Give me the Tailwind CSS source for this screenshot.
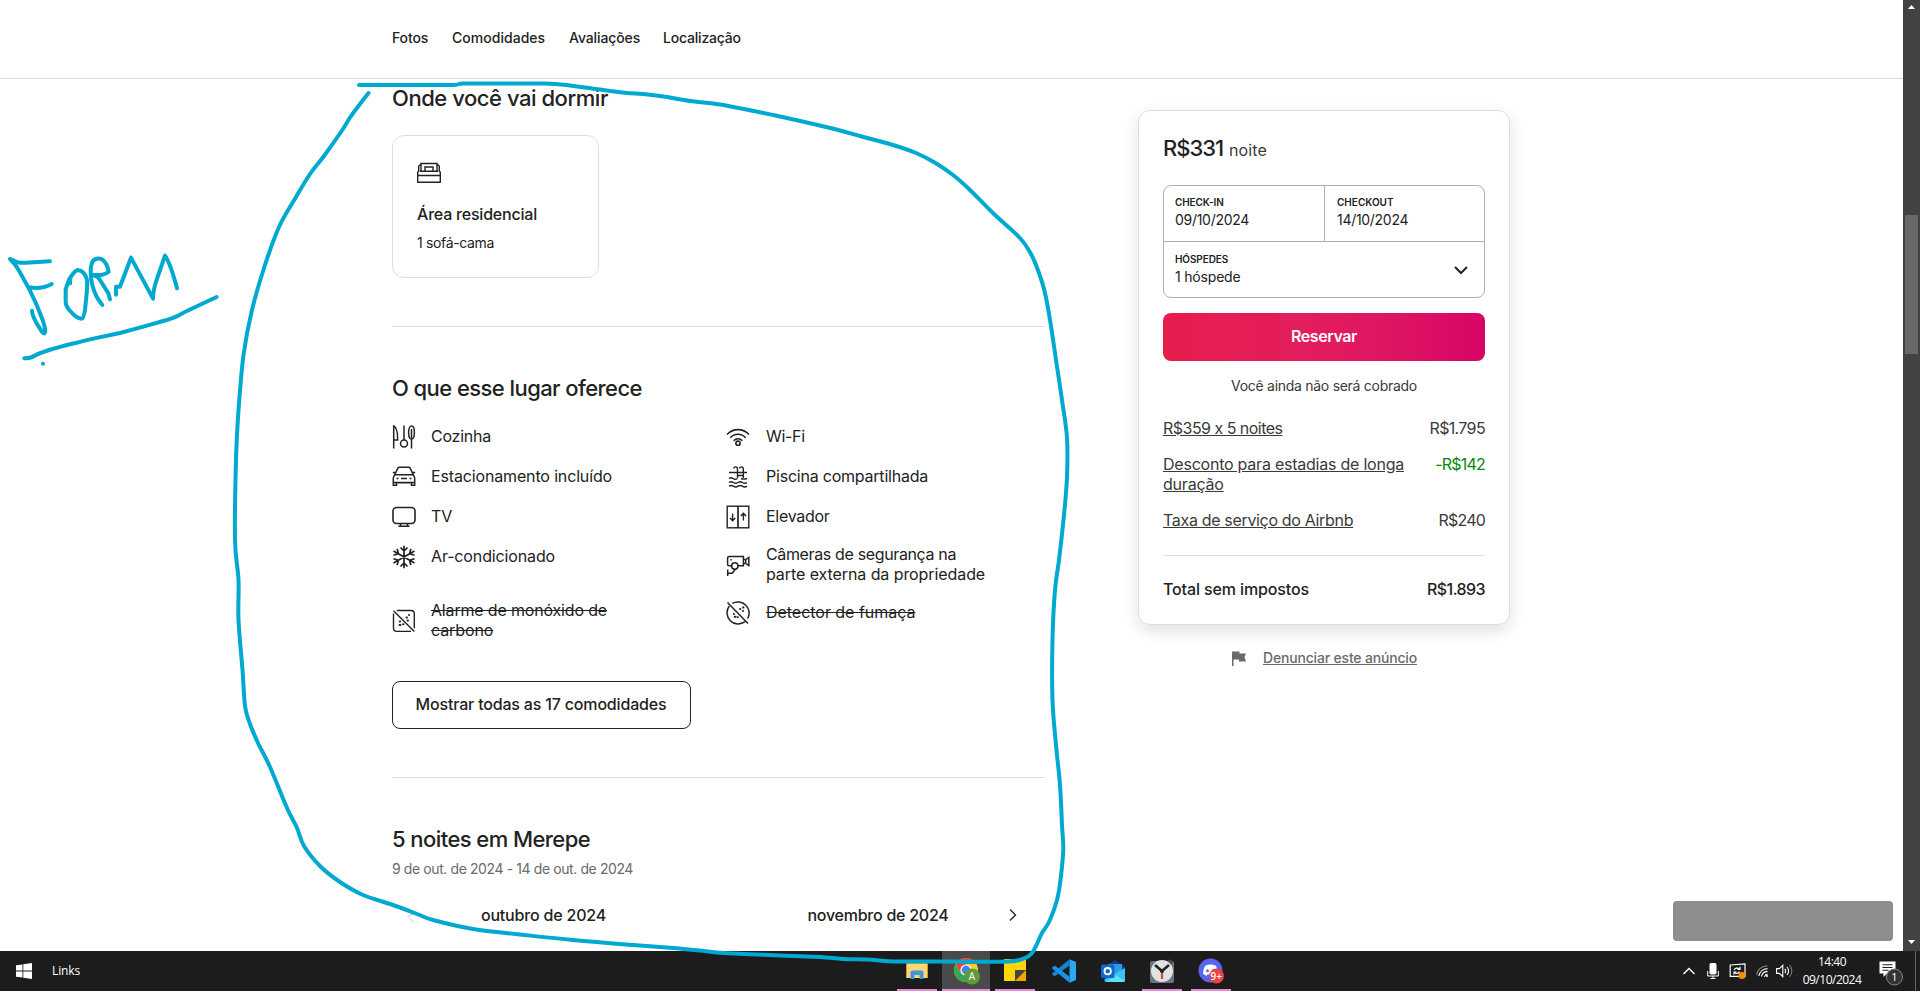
<!DOCTYPE html>
<html lang="pt-BR">
<head>
<meta charset="utf-8">
<title>Anúncio</title>
<script src="https://cdn.jsdelivr.net/npm/@tailwindcss/browser@4"></script>
</head>
<body class="relative flex h-[991px] w-[1920px] flex-col overflow-hidden bg-white font-[Inter,Roboto,sans-serif] text-[16px] leading-[20px] text-[#222222] [font-feature-settings:'calt'_0]">

<div class="flex h-[951px] shrink-0 overflow-hidden">
  <div class="relative w-[1903px]">
    <header class="flex h-[79px] items-center gap-6 border-b border-[#dddddd] pl-[392px] pb-[2px] text-[14px] leading-[18px] font-[450] whitespace-nowrap">
      <a class="w-[36px] tracking-[-0.15px]">Fotos</a>
      <a class="w-[93px] tracking-[0.03px]">Comodidades</a>
      <a class="w-[70px] tracking-[-0.1px]">Avaliações</a>
      <a class="tracking-[-0.2px]">Localização</a>
    </header>

    <main class="flex items-start pl-[392px] whitespace-nowrap">
      <div class="w-[653px] pt-[6px]">
        <section class="pb-12">
          <h2 class="text-[22px] leading-[26px] font-medium tracking-[-0.46px]">Onde você vai dormir</h2>
          <div class="mt-6 h-[143px] w-[207px] rounded-xl border border-[#dddddd] p-6">
            <svg class="size-6" viewBox="0 0 24 24" fill="none" stroke="#222" stroke-width="1.4"><path d="M.7 22.700V12.500l1-1.800V6.500c0-1 .6-1.500 2-1.800M23.300 22.700V12.500l-1-1.800V6.500c0-1-.6-1.500-2-1.800M.7 15.500H23.300M.7 22.300H23.300M2.800 11.300H21.200M4 11V3.500H20V11M8 11V7H16V11"/></svg>
            <div class="mt-5 font-medium tracking-[-0.21px]">Área residencial</div>
            <div class="mt-[10px] text-[14px] leading-[18px] tracking-[-0.35px]">1 sofá-cama</div>
          </div>
        </section>

        <section class="border-t border-[#dddddd] pt-12 pb-12">
          <h2 class="text-[22px] leading-[26px] font-medium tracking-[-0.57px]">O que esse lugar oferece</h2>
          <div class="mt-6 grid grid-cols-[334px_319px] items-start gap-y-4">
            <div class="flex h-6 items-start gap-[15px]">
              <svg class="size-6 shrink-0" viewBox="0 0 24 24" fill="none" stroke="#222" stroke-width="1.5"><path d="M1.700 23.500V.8c3 1.500 4 5 4 14.200h-4M12 .5v14.500"/><circle cx="12" cy="18.500" r="3.500"/><path d="M19.500 14v9.500"/><ellipse cx="19.500" cy="7.500" rx="2.900" ry="6.500"/><path d="M19.500 4v9"/></svg>
              <span class="pt-px tracking-[-0.24px]">Cozinha</span>
            </div>
            <div class="flex h-6 items-start gap-4">
              <svg class="size-6 shrink-0" viewBox="0 0 24 24" fill="none" stroke="#222" stroke-width="1.6"><path d="M1 9.500c6-6.500 16-6.500 22 0M4.300 12.700c4.300-4.700 11.100-4.700 15.400 0M7.600 15.700c2.600-2.700 6.200-2.700 8.800 0"/><circle cx="12" cy="18.200" r="2.100"/></svg>
              <span class="pt-px tracking-[-0.3px]">Wi-Fi</span>
            </div>
            <div class="flex h-6 items-start gap-[15px]">
              <svg class="size-6 shrink-0" viewBox="0 0 24 24" fill="none" stroke="#222" stroke-width="1.5"><path d="M.8 7.500h3l2-4.300c.3-.6.700-.9 1.400-.9h9.600c.7 0 1.100.3 1.400.9l2 4.300h3M3.500 8 2 11.200c-.5.900-.7 1.400-.7 2.300v6.700h3.200v-2.500h15v2.500h3.200v-6.700c0-.9-.2-1.400-.7-2.300L20.500 8M2.800 9.800h18.400M1.500 17.600h21M4.500 13.500h2M9 13.500h6M17.500 13.500h2"/></svg>
              <span class="pt-px tracking-[-0.15px]">Estacionamento incluído</span>
            </div>
            <div class="flex h-6 items-start gap-4">
              <svg class="size-6 shrink-0" viewBox="0 0 24 24" fill="none" stroke="#222" stroke-width="1.400"><path d="M3 7.500h18M11.500 13V4c0-2.800-3.700-2.800-3.700-.5M17.300 13V4c0-2.800-3.700-2.800-3.700-.5M11.500 10.500h5.800M3 13.500c1.500-1 2.600-1 4 0s3 1 4.500 0M15 13.500c2 1 3.500 1 6 0M3 17.500c1.500-1 3-1 4.500 0s3 1 4.500 0 3-1 4.500 0 3 1 4.500 0M3 21.200c1.500-1 3-1 4.500 0s3 1 4.500 0 3-1 4.500 0 3 1 4.500 0"/></svg>
              <span class="pt-px tracking-[-0.22px]">Piscina compartilhada</span>
            </div>
            <div class="flex h-6 items-start gap-[15px]">
              <svg class="size-6 shrink-0" viewBox="0 0 24 24" fill="none" stroke="#222" stroke-width="1.6"><rect x="1" y="2.500" width="22" height="16" rx="3.500"/><path d="M8.500 18.500v2.800M15.500 18.500v2.800M6.500 21.300h11"/></svg>
              <span class="pt-px">TV</span>
            </div>
            <div class="flex h-6 items-start gap-4">
              <svg class="size-6 shrink-0" viewBox="0 0 24 24" fill="none" stroke="#222" stroke-width="1.4"><rect x="1.200" y="1.200" width="21.600" height="21.600"/><path d="M12 1v22" stroke-width="1.700"/><path d="M6.600 8.500v7.200M4 13l2.600 2.700L9.200 13M17.400 15.500V8.300M14.800 11l2.600-2.700L20 11"/></svg>
              <span class="pt-px tracking-[-0.29px]">Elevador</span>
            </div>
            <div class="flex h-6 items-start gap-[15px]">
              <svg class="size-6 shrink-0" viewBox="0 0 24 24" fill="none" stroke="#222" stroke-width="1.700"><path d="M12 .7v22.600M1.500 18 22.500 6M1.500 6l21 12M8.500 2.500 12 6l3.500-3.500M8.500 21.500 12 18l3.500 3.500M1.500 10.300l4.800-1.600L5.200 3.900M22.500 13.700l-4.800 1.600 1.100 4.800M1.500 13.700l4.800 1.600-1.100 4.800M22.500 10.300l-4.800-1.600 1.100-4.800"/></svg>
              <span class="pt-px tracking-[-0.14px]">Ar-condicionado</span>
            </div>
            <div class="flex h-10 items-center gap-4">
              <svg class="size-6 shrink-0" viewBox="0 0 24 24" fill="none" stroke="#222" stroke-width="1.500"><path d="M5.500 12.800H3.200c-1 0-1.600-.6-1.600-1.600V5c0-1 .6-1.600 1.600-1.600h14.200v9.400h-5.200M17.500 6.500h2.300l3-2v8l-3-2h-2.300M19.700 6.500v4M4.300 6.700h1.500M1.700 23v-6.500M1.700 20.300h4.500l3.200-4"/><circle cx="8.800" cy="13" r="3.200"/></svg>
              <span class="pb-[2px]"><span class="tracking-[-0.36px]">Câmeras de segurança na</span><br><span class="tracking-[-0.08px]">parte externa da propriedade</span></span>
            </div>
            <div class="flex h-10 items-center gap-[15px]">
              <svg class="size-6 shrink-0" viewBox="0 0 24 24" fill="none" stroke="#222" stroke-width="1.400"><path d="M4.800 1.500H19c2 0 3.300 1.300 3.300 3.300v14.400M19 22.400H4.800c-2 0-3.300-1.300-3.300-3.300V4.500M1.500 1.700l20.800 20.800"/><path d="M14.500 8.500h.5M17 6h.1M15.500 11.500h.5M7.800 12.500h.4M7.500 16h1M11 15.300h.5" stroke-width="1.900" stroke-linecap="round"/></svg>
              <span class="pb-[2px] line-through"><span class="tracking-[-0.17px]">Alarme de monóxido de</span><br><span class="tracking-[-0.1px]">carbono</span></span>
            </div>
            <div class="flex h-6 items-start gap-4">
              <svg class="size-6 shrink-0" viewBox="0 0 24 24" fill="none" stroke="#222" stroke-width="1.500"><path d="M6.300 2.400a11.200 11.200 0 0 1 15.300 15.300M19 20.700A11.200 11.200 0 0 1 3.300 5M1.500 1.500l20.500 21"/><path d="M14 8h.4M17 6.500h.5M17 10h.1M7.800 13h.1M8.700 15.800h1M11.800 16.200h.1" stroke-width="1.900" stroke-linecap="round"/></svg>
              <span class="pt-px tracking-[-0.03px] line-through">Detector de fumaça</span>
            </div>
          </div>
          <button class="mt-10 flex h-12 w-[299px] items-center justify-center rounded-lg border border-[#222222] pr-px pb-[2px] font-medium tracking-[-0.18px]">Mostrar todas as 17 comodidades</button>
        </section>

        <section class="border-t border-[#dddddd] pt-12">
          <h2 class="text-[22px] leading-[26px] font-medium tracking-[-0.57px]">5 noites em Merepe</h2>
          <p class="mt-2 text-[14px] leading-[18px] tracking-[-0.4px] text-[#6a6a6a]">9 de out. de 2024 - 14 de out. de 2024</p>
          <div class="mt-[27px] -ml-4 flex w-[669px] font-medium">
            <div class="flex w-[335px] items-center px-[29px]">
              <svg class="mt-1 h-3 w-3" viewBox="0 0 12 12" fill="none" stroke="#dddddd" stroke-width="1.300"><path d="M8.500 1 3.500 6l5 5"/></svg>
              <span class="flex-1 text-center tracking-[-0.19px]">outubro de 2024</span>
              <span class="w-3"></span>
            </div>
            <div class="flex w-[334px] items-center px-[26px]">
              <span class="w-3"></span>
              <span class="flex-1 text-center tracking-[-0.25px]">novembro de 2024</span>
              <svg class="h-3 w-3" viewBox="0 0 12 12" fill="none" stroke="#222" stroke-width="1.400"><path d="M3 .5 8.500 6 3 11.500"/></svg>
            </div>
          </div>
        </section>
      </div>

      <aside class="ml-[93px] w-[372px] pt-[31px]">
        <div class="rounded-xl border border-[#dddddd] p-6 shadow-[0_6px_16px_rgba(0,0,0,0.12)]">
          <div class="flex h-[26px] items-baseline gap-[6px] leading-[26px]"><span class="w-[60px] text-[22px] font-medium tracking-[-1.04px]">R$331</span><span class="tracking-[0.1px] text-[#3a3a3a]">noite</span></div>
          <div class="mt-6 w-[322px] rounded-lg border border-[#b0b0b0] text-[14px] leading-[18px]">
            <div class="flex h-[56px] border-b border-[#b0b0b0]">
              <div class="w-[160px] pt-[10px] pl-[11px]"><div class="text-[10px] leading-[12px] font-semibold tracking-[-0.1px]">CHECK-IN</div><div class="mt-[3px] tracking-[-0.29px]">09/10/2024</div></div>
              <div class="flex-1 border-l border-[#b0b0b0] pt-[10px] pl-[12px]"><div class="text-[10px] leading-[12px] font-semibold">CHECKOUT</div><div class="mt-[3px] tracking-[-0.29px]">14/10/2024</div></div>
            </div>
            <div class="flex h-[55px] items-center justify-between pr-[15px] pl-[11px]">
              <div class="pb-px"><div class="text-[10px] leading-[12px] font-semibold tracking-[-0.1px]">HÓSPEDES</div><div class="mt-[3px] tracking-[-0.19px]">1 hóspede</div></div>
              <svg class="h-4 w-4" viewBox="0 0 16 16" fill="none" stroke="#222" stroke-width="2"><path d="M2 5l6 6 6-6"/></svg>
            </div>
          </div>
          <button class="mt-[15px] flex h-12 w-full items-center justify-center rounded-lg bg-linear-to-r from-[#e61e4d] via-[#e31c5f] to-[#d70466] pb-[2px] font-semibold tracking-[-0.42px] text-white">Reservar</button>
          <p class="mt-4 text-center text-[14px] leading-[18px] tracking-[-0.28px] text-[#3a3a3a]">Você ainda não será cobrado</p>
          <div class="mt-[23px] flex flex-col gap-4 pb-6 text-[#3a3a3a]">
            <div class="flex justify-between"><span class="tracking-[-0.52px] underline">R$359 x 5 noites</span><span class="tracking-[-0.64px]">R$1.795</span></div>
            <div class="flex justify-between"><span class="underline"><span class="tracking-[-0.23px]">Desconto para estadias de longa</span><br><span class="tracking-[-0.2px]">duração</span></span><span class="tracking-[-0.8px] text-[#008a05]">-R$142</span></div>
            <div class="flex justify-between"><span class="tracking-[-0.33px] underline">Taxa de serviço do Airbnb</span><span class="tracking-[-0.8px]">R$240</span></div>
          </div>
          <div class="mt-px flex justify-between border-t border-[#dddddd] pt-[23px] pb-px font-medium"><span class="tracking-[-0.12px]">Total sem impostos</span><span class="tracking-[-0.57px]">R$1.893</span></div>
        </div>
        <div class="mt-6 flex items-center gap-[17px] pl-[93px] text-[14px] leading-[18px] font-medium text-[#6a6a6a]">
          <svg class="h-[15px] w-[15px]" viewBox="0 0 15 15" fill="#6a6a6a"><path d="M1 .5h7.500v2H15L13.500 6 15 10.500H8v-2H2.500V15H1z"/></svg>
          <span class="tracking-[-0.18px] underline">Denunciar este anúncio</span>
        </div>
      </aside>
    </main>
    <div class="absolute top-[901px] left-[1673px] h-10 w-[220px] rounded-[4px] bg-[#8e8e8e]"></div>
  </div>

  <div class="flex w-[17px] flex-col items-center bg-[#424242]">
    <svg class="h-[17px] w-[17px]" viewBox="0 0 17 17" fill="#fff"><path d="M5 9h7L8.500 5z"/></svg>
    <div class="mt-[198px] h-[139px] w-[13px] bg-[#686868]"></div>
    <svg class="mt-auto h-[17px] w-[17px]" viewBox="0 0 17 17" fill="#fff"><path d="M5 6h7l-3.500 4z"/></svg>
  </div>
</div>

<footer class="flex h-10 shrink-0 bg-[#1c1c1c] font-['Open_Sans',sans-serif] text-[12px] leading-[17px] text-white">
  <div class="flex w-[897px] items-center pl-4">
    <svg class="h-4 w-4" viewBox="0 0 16 16" fill="#fff"><path d="M0 2.300 6.500 1.400v6.200H0zM7.300 1.300 16 0v7.600H7.300zM0 8.400h6.500v6.200L0 13.700zM7.300 8.400H16V16l-8.700-1.300z"/></svg>
    <span class="mb-[2px] ml-5 text-[12px] tracking-[-0.1px]">Links</span>
  </div>
  <div class="flex w-10 items-center justify-center border-b-2 border-[#e98ad8]">
    <svg class="h-6 w-6" viewBox="0 0 24 24"><path d="M1.500 3h8l1.500 2h11.500v15h-21z" fill="#e8a33a"/><path d="M1.500 6h21v14h-21z" fill="#fcd670"/><path d="M5.500 21v-6.500c0-1.300.8-2 2-2h9c1.200 0 2 .7 2 2V21h-4v-4h-5v4z" fill="#3e97dd"/></svg>
  </div>
  <div class="ml-[5px] flex w-12 items-center justify-center border-b-2 border-[#e98ad8] bg-[#4a4a4a]">
    <svg class="mt-1 ml-[2px] h-[28px] w-[28px]" viewBox="0 0 28 28"><circle cx="13" cy="12" r="12" fill="#fcc934"/><path d="M13 24A12 12 0 0 1 2.600 6l5.200 9 5.200 3z" fill="#34a853"/><path d="M2.600 6A12 12 0 0 1 23.400 6H13L8 15z" fill="#ea4335"/><circle cx="13" cy="12" r="5.600" fill="#fff"/><circle cx="13" cy="12" r="4.400" fill="#4285f4"/><circle cx="19" cy="18.500" r="8" fill="#5e9c37"/><text x="19" y="22.200" text-anchor="middle" font-size="10" fill="#fff">A</text></svg>
  </div>
  <div class="ml-[5px] flex w-10 items-center justify-center border-b-2 border-[#e98ad8]">
    <svg class="h-[22px] w-[22px]" viewBox="0 0 22 22"><path d="M0 0h22v11L11 22H0z" fill="#ffd60a"/><path d="M11 11h11v11H11z" fill="#f0a500"/><path d="M11 11h11L11 22z" fill="#444"/></svg>
  </div>
  <div class="ml-[9px] flex w-10 items-center justify-center">
    <svg class="h-6 w-6" viewBox="0 0 24 24"><path d="M17.500.300 24 3v18l-6.500 2.700z" fill="#2aa9f3"/><path d="M17.500.300v6.200L3 17.300.5 16c-.6-.5-.6-1.200 0-1.700z" fill="#1583d0"/><path d="M17.500 23.700v-6.200L3 6.700.5 8c-.6.500-.6 1.200 0 1.700z" fill="#1b92e2"/></svg>
  </div>
  <div class="ml-[9px] flex w-10 items-center justify-center">
    <svg class="h-6 w-6" viewBox="0 0 24 24"><path d="M3.500 8 14 1l10 7v13.500H3.500z" fill="#123f86"/><path d="M7 5h14v10H7z" fill="#2a9be8"/><path d="M3.500 20.500 24 9v12.500c0 .8-.6 1.500-1.500 1.500H5c-.9 0-1.500-.7-1.500-1.500z" fill="#36c5f4"/><path d="m5 23 10-7 9 6c-.3.700-.8 1-1.500 1z" fill="#5fe0fb"/><rect y="5.500" width="13.500" height="13.500" rx="1.500" fill="#1069c9"/><circle cx="6.700" cy="12.200" r="3.200" fill="none" stroke="#fff" stroke-width="1.800"/></svg>
  </div>
  <div class="ml-[9px] flex w-10 items-center justify-center border-b-2 border-[#e98ad8]">
    <svg class="mt-0.5 h-6 w-6" viewBox="0 0 24 24"><rect y="2" width="24" height="22" rx="2" fill="#69757f"/><circle cx="20" cy="3" r="2.500" fill="#444"/><circle cx="12" cy="12" r="11" fill="#dfe1e3"/><path d="m5 6 7 6 7-6" fill="none" stroke="#222" stroke-width="2.500"/><path d="M12 12v8" stroke="#d9471f" stroke-width="2.200"/><circle cx="12" cy="12" r="2" fill="#222"/></svg>
  </div>
  <div class="ml-[9px] flex w-10 items-center justify-center border-b-2 border-[#e98ad8]">
    <svg class="mt-0.5 h-[26px] w-[26px]" viewBox="0 0 26 26"><circle cx="12.500" cy="12.500" r="12" fill="#5865f2"/><path d="M7.500 7.500c3-1.400 7-1.400 10 0 1.800 2.800 2.500 5.500 2.300 8.500-1 .9-2.200 1.500-3.500 1.800l-1-1.500c-1.600.5-4 .5-5.600 0l-1 1.500c-1.300-.3-2.500-.9-3.500-1.800-.2-3 .5-5.700 2.300-8.500z" fill="#fff"/><circle cx="9.500" cy="12.800" r="1.500" fill="#5865f2"/><circle cx="15.500" cy="12.800" r="1.500" fill="#5865f2"/><circle cx="18.500" cy="18" r="7.500" fill="#ed4245"/><text x="18.300" y="21.800" text-anchor="middle" font-size="10" font-weight="600" fill="#fff">9+</text></svg>
  </div>

  <div class="ml-auto flex w-[237px] items-center">
    <svg class="h-3 w-3" viewBox="0 0 12 12" fill="none" stroke="#fff" stroke-width="1.400"><path d="M.5 9 6 3.500 11.500 9"/></svg>
    <svg class="ml-3 h-4 w-3" viewBox="0 0 12 16" fill="none" stroke="#fff"><rect x="3" y=".5" width="6" height="10.500" rx="1" fill="#fff"/><path d="M.7 8v5h10.600V8M6 13v2.500M3.500 15.500h5"/></svg>
    <svg class="ml-2.5 h-4 w-[17px]" viewBox="0 0 17 16" fill="none" stroke="#fff" stroke-width="1.200"><path d="M1.200 2 16 .8v12.500H1.200zM5.200 7.200c.3-2 3.500-3 5-1M11 3.800v2.500H8.500M10.500 8.500c-.5 2-3.500 2.700-5 .8M5 11.500V9h2.500"/><circle cx="13" cy="12.500" r="3.500" fill="#ff8c00" stroke="none"/></svg>
    <svg class="ml-2.5 h-3 w-3" viewBox="0 0 12 12" fill="none" stroke="#fff" stroke-width="1.100"><path d="M.5 10C1.500 5 5.500 1.200 11.500.8" stroke="#888"/><path d="M2.800 11C3.500 7 7 3.900 11.500 3.600M5.500 11.500c.5-2.600 3-4.900 6-5.100M8.500 11.800c.3-1.300 1.500-2.500 3-2.700"/><circle cx="11" cy="11" r="1" fill="#fff" stroke="none"/></svg>
    <svg class="ml-2 h-3.5 w-[17px]" viewBox="0 0 17 14" fill="none" stroke="#fff" stroke-width="1.100"><path d="M.6 4.600h2.800L6.800 1.300v11.400L3.400 9.400H.6zM8.800 4.800c1 1.300 1 3.100 0 4.400M11 3c1.900 2.400 1.900 5.600 0 8"/><path d="M13.500 1.200c2.800 3.500 2.800 8.100 0 11.600" stroke="#777"/></svg>
    <div class="ml-1.5 w-[66px] text-center leading-[18px] tracking-[-0.5px]"><div>14:40</div><div>09/10/2024</div></div>
    <svg class="mt-[2px] ml-[14px] h-7 w-6" viewBox="0 0 24 28"><path d="M.5 3.500h16v12H8L4.500 19v-3.500h-4z" fill="#fff"/><path d="M3.500 6.700h10M3.500 9.500h10M3.500 12.300h6" stroke="#1c1c1c" stroke-width="1.100"/><circle cx="15.500" cy="19" r="8" fill="#333" stroke="#888"/><text x="15.500" y="23" text-anchor="middle" font-size="11" fill="#fff">1</text></svg>
    <div class="mr-1 ml-auto h-10 w-px bg-[#666]"></div>
  </div>
</footer>

<!-- Freehand annotations drawn over the screen -->
<svg class="pointer-events-none absolute top-0 left-0 h-[991px] w-[1920px]" viewBox="0 0 1920 991" fill="none" stroke="#00a9cf" stroke-width="4" stroke-linecap="round" stroke-linejoin="round">
  <path id="loop"/>
  <g transform="translate(0 230) scale(.33333)" stroke-width="12">
    <path d="M150 94C120 95 90 99 60 98C48 97 42 91 30 87C42 98 52 112 60 127L90 182C105 212 117 240 128 270C135 292 138 303 134 309C131 313 126 306 122 299C112 284 96 260 96 242M88 172C110 176 130 176 155 162"/>
    <path d="M210 160L211 143C218 132 224 122 233 120C247 121 256 130 261 150C264 170 258 205 255 240C252 257 250 265 246 266C236 266 224 258 215 248C205 238 197 226 197 215V178C200 168 204 157 208 147"/>
    <path d="M307 225C290 205 283 190 277 165C270 140 270 105 279 93C287 83 303 84 310 91C317 98 324 110 326 125C315 136 300 136 277 135C292 138 295 142 302 153L325 190L330 208"/>
    <path d="M348 194V170H360L393 83L459 206C459 175 468 155 475 135L495 77C510 98 523 145 531 175"/>
    <path d="M73 385C84 385 92 385 102 378C140 356 205 345 280 326L360 309L430 290L490 273C515 266 530 260 545 251C565 240 605 222 650 201M129 401h.1"/>
  </g>
</svg>
<script>
  // Pen samples of the big loop, joined by a Catmull-Rom spline
  const p = [[359,85],[410,85],[453,85],[463,83.5],[500,83.5],[545,83.5],[570,85.5],[603,90],[627,93],[643,94],[667,97],[690,101],[720,104.5],[773,115],[826,127],[860,136],[893,145],[916,153],[935.5,163],[953,175],[969,189],[994,214],[1020,238],[1031,254],[1039,273],[1045,293],[1050.5,323],[1056,360],[1062,400],[1067,438],[1067,477],[1064,515],[1059,560],[1055,590],[1052.5,640],[1052.5,700],[1056,745],[1060,785],[1062,825],[1063.3,850],[1060.5,880],[1057,900],[1049.5,921],[1042,933],[1036.5,945],[1032,953],[1025,958],[1008,961.5],[950,961.5],[893,961.5],[868,959.5],[843,959],[820,957],[781,955.5],[725,953],[700,950.5],[673,948],[633,945],[573,940],[520,934.5],[473,929],[433,920],[417,914],[393,905],[363,895],[340,882],[320,866],[304,846],[297,828],[287,808],[270,767],[258,743],[250,724],[245,706],[242.5,670],[238.5,620],[238.5,580],[235,540],[236,460],[238.5,410],[243.5,355],[252,310],[265,265],[279,227],[293,202],[310,174],[324,156],[343,129],[350,117.5],[360,104],[368.5,93]];
  let d = 'M' + p[0];
  for (let i = 0; i < p.length - 1; i++) {
    const a = p[i - 1] || p[i], b = p[i], c = p[i + 1], e = p[i + 2] || c;
    d += 'C' + [b[0] + (c[0] - a[0]) / 6, b[1] + (c[1] - a[1]) / 6, c[0] - (e[0] - b[0]) / 6, c[1] - (e[1] - b[1]) / 6, c[0], c[1]].map(v => v.toFixed(1));
  }
  document.getElementById('loop').setAttribute('d', d);
</script>
</body>
</html>
